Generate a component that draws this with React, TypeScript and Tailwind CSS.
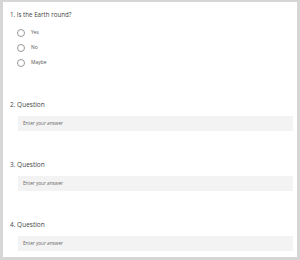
const options = ["Yes", "No", "Maybe"];

function TextQuestion({ num, last }: { num: number; last?: boolean }) {
  return (
    <div className={last ? "" : "mb-[29px]"}>
      <div className="text-[6.5px] leading-[10px] text-[#444] pl-[7px]">{num}. Question</div>
      <div className="mt-[6px] ml-[15px] h-[15px] bg-[#f3f3f3] flex items-center pl-[5px] text-[4.7px] text-[#666]">
        Enter your answer
      </div>
    </div>
  );
}

export default function App() {
  return (
    <div
      className="w-[300px] h-[260px] bg-white border-[#d6d6d6] border-l-[3px] border-r-[3px] border-t-[2px] border-b-[3px] overflow-hidden"
      style={{ fontFamily: '"Open Sans", "Noto Sans", sans-serif' }}
    >
      <div className="pt-[8px] pr-[4px]">
        <div className="text-[6.2px] leading-[10px] text-[#444] pl-[7px]">1. Is the Earth round?</div>
        <div className="mt-[9px] pl-[14px] flex flex-col gap-[7px]">
          {options.map((o) => (
            <div key={o} className="flex items-center gap-[6px] h-[8px]">
              <span className="w-[8px] h-[8px] rounded-full border border-[#999] bg-white" />
              <span className="text-[5px] text-[#555]">{o}</span>
            </div>
          ))}
        </div>
        <div className="mt-[33px]">
          <TextQuestion num={2} />
          <TextQuestion num={3} />
          <TextQuestion num={4} last />
        </div>
      </div>
    </div>
  );
}
